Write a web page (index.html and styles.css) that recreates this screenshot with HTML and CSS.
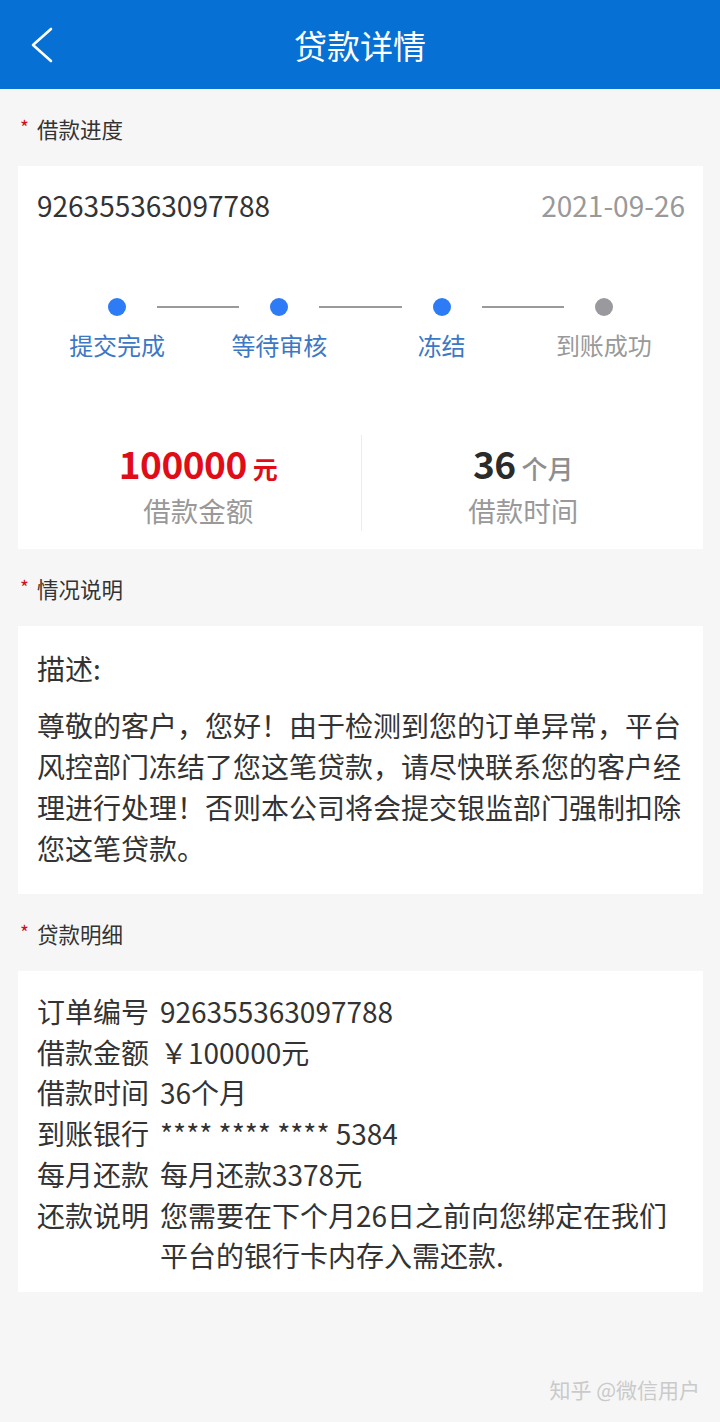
FILE: index.html
```html
<!DOCTYPE html>
<html lang="zh-CN">
<head>
<meta charset="utf-8">
<title>贷款详情</title>
<link rel="stylesheet" href="styles.css">
</head>
<body>
<header class="topbar">
  <div class="back">
    <svg width="30" height="40" viewBox="0 0 30 40"><polyline points="22,4 4,20 22,36" fill="none" stroke="#fff" stroke-width="2.6" stroke-linecap="round" stroke-linejoin="round"/></svg>
  </div>
  <h1 class="title">贷款详情</h1>
  <div></div>
</header>

<div class="section-label"><span class="star">*</span>借款进度</div>
<section class="card progress-card">
  <div class="order-row">
    <span class="order-no">926355363097788</span>
    <span class="order-date">2021-09-26</span>
  </div>
  <div class="steps">
    <div class="track">
      <span class="dot on"></span><span class="line"></span>
      <span class="dot on"></span><span class="line"></span>
      <span class="dot on"></span><span class="line"></span>
      <span class="dot"></span>
    </div>
    <div class="step-labels">
      <span class="on">提交完成</span>
      <span class="on">等待审核</span>
      <span class="on">冻结</span>
      <span>到账成功</span>
    </div>
  </div>
  <div class="stats">
    <div class="stat">
      <div class="stat-value"><span class="num red">100000</span><span class="unit red">元</span></div>
      <div class="stat-label">借款金额</div>
    </div>
    <div class="stat">
      <div class="stat-value"><span class="num dark">36</span><span class="unit gray">个月</span></div>
      <div class="stat-label">借款时间</div>
    </div>
  </div>
</section>

<div class="section-label"><span class="star">*</span>情况说明</div>
<section class="card desc-card">
  <div class="desc-title">描述:</div>
  <p class="desc-text">尊敬的客户，您好！由于检测到您的订单异常，平台风控部门冻结了您这笔贷款，请尽快联系您的客户经理进行处理！否则本公司将会提交银监部门强制扣除您这笔贷款。</p>
</section>

<div class="section-label"><span class="star">*</span>贷款明细</div>
<section class="card detail-card">
  <dl class="details">
    <dt>订单编号</dt><dd>926355363097788</dd>
    <dt>借款金额</dt><dd>￥100000元</dd>
    <dt>借款时间</dt><dd>36个月</dd>
    <dt>到账银行</dt><dd>**** **** **** 5384</dd>
    <dt>每月还款</dt><dd>每月还款3378元</dd>
    <dt>还款说明</dt><dd>您需要在下个月26日之前向您绑定在我们平台的银行卡内存入需还款.</dd>
  </dl>
</section>

<div class="watermark">知乎 @微信用户</div>
</body>
</html>
```

FILE: styles.css
```css
* { box-sizing: border-box; }
html, body {
  margin: 0;
  padding: 0;
}
body {
  width: 720px;
  min-height: 1422px;
  background: #f6f6f6;
  font-family: "Noto Sans CJK SC", "Noto Sans", sans-serif;
  color: #333;
}

.topbar {
  height: 89px;
  background: #0670d4;
  display: grid;
  grid-template-columns: 90px 1fr 90px;
  align-items: center;
}
.back {
  padding-left: 29px;
  display: flex;
  align-items: center;
  height: 89px;
}
.title {
  margin: 0;
  text-align: center;
  color: #fff;
  font-size: 33px;
  font-weight: 400;
  line-height: 40px;
}

.section-label {
  padding: 25px 0 22px 20px;
  font-size: 21.5px;
  line-height: 30px;
  color: #333;
  display: flex;
  align-items: center;
}
.star {
  color: #d0101c;
  font-size: 19px;
  width: 17px;
  align-self: flex-start;
  line-height: 26px;
}

.card {
  background: #fff;
  margin: 0 17px 0 18px;
  padding: 0 19px;
}

.progress-card { padding-top: 22px; padding-bottom: 18px; }
.order-row {
  display: flex;
  justify-content: space-between;
  font-size: 28px;
  line-height: 34px;
}
.order-date { color: #999; margin-right: -1px; }

.steps { margin: 76px -1px 0 -1px; }
.track {
  display: flex;
  align-items: center;
  gap: 31px;
  margin: 0 72px;
  height: 18px;
}
.dot {
  width: 18px;
  height: 18px;
  border-radius: 50%;
  background: #9a9a9e;
  flex: none;
}
.dot.on { background: #2d7bf5; }
.line {
  flex: 1;
  height: 2px;
  background: #9a9a9a;
}
.step-labels {
  display: grid;
  grid-template-columns: repeat(4, 1fr);
  margin-top: 12px;
  font-size: 24px;
  line-height: 34px;
  text-align: center;
  color: #999;
}
.step-labels .on { color: #3b78c6; }

.stats {
  display: grid;
  grid-template-columns: 1fr 1fr;
  margin: 73px -1px 0 -1px;
}
.stat {
  text-align: center;
  padding: 5px 0 2px;
  height: 96px;
}
.stat + .stat { border-left: 1px solid #ececec; }
.stat-value {
  line-height: 46px;
  height: 46px;
  display: flex;
  justify-content: center;
  align-items: baseline;
}
.num { font-size: 37px; font-weight: 700; letter-spacing: -0.5px; }
.unit { font-size: 25px; margin-left: 6px; }
.red { color: #e00d19; }
.unit.red { font-weight: 700; }
.dark { color: #2b2b2b; }
.gray { color: #8e8e8e; font-weight: 500; font-size: 26px; }
.stat-label {
  margin-top: 6px;
  font-size: 27.5px;
  line-height: 36px;
  color: #999;
}

.desc-card { padding-top: 26px; padding-bottom: 25px; }
.desc-title { font-size: 28px; line-height: 32px; }
.desc-text {
  margin: 21px 0 0;
  font-size: 28px;
  line-height: 41px;
  color: #333;
}

.detail-card { padding-top: 20px; padding-bottom: 16px; }
.details {
  margin: 0;
  display: grid;
  grid-template-columns: 112px 1fr;
  column-gap: 11px;
  font-size: 28px;
  line-height: 40.7px;
}
.details dt, .details dd { margin: 0; }
.details dd { color: #333; }

.watermark {
  margin-top: 82px;
  text-align: right;
  padding-right: 20px;
  font-size: 21px;
  line-height: 30px;
  color: #cacaca;
}
```
